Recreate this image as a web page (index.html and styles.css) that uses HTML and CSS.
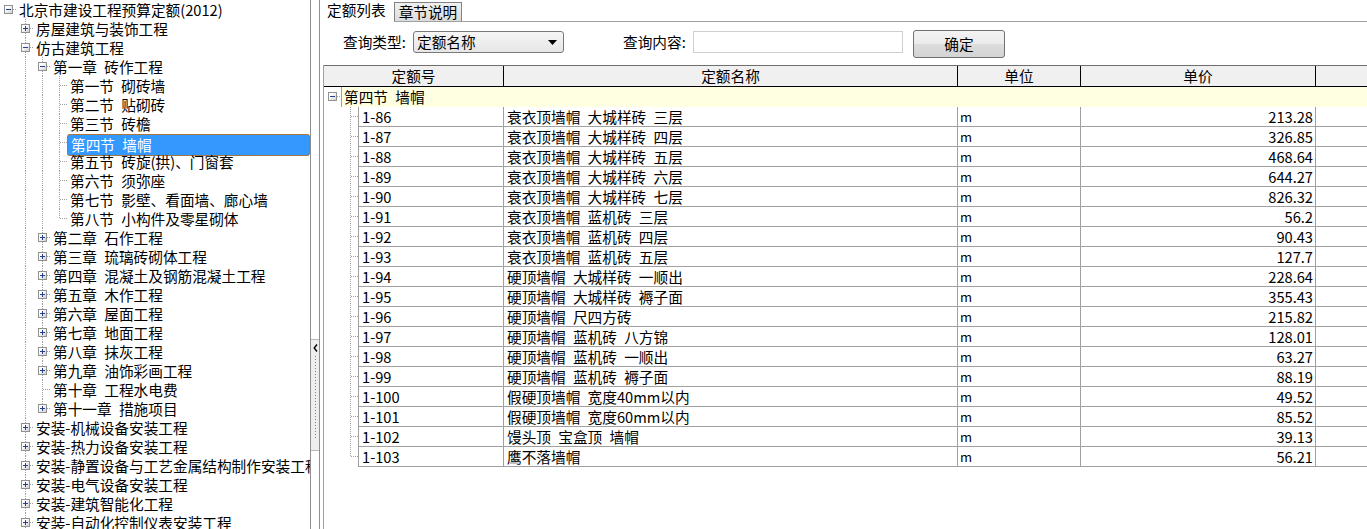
FILE: index.html
```html
<!DOCTYPE html>
<html lang="zh-CN">
<head>
<meta charset="utf-8">
<title>北京市建设工程预算定额</title>
<link rel="stylesheet" href="styles.css">
</head>
<body>
<div class="app">
  <div class="tree">
    <div class="row"><span class="n r"><span class="bx m"></span></span><span class="txt">北京市建设工程预算定额(2012)</span></div>
    <div class="row"><span class="i"></span><span class="n tb"><span class="bx p"></span></span><span class="txt">房屋建筑与装饰工程</span></div>
    <div class="row"><span class="i"></span><span class="n tb"><span class="bx m"></span></span><span class="txt">仿古建筑工程</span></div>
    <div class="row"><span class="i"></span><span class="i v"></span><span class="n tb"><span class="bx m"></span></span><span class="txt">第一章 砖作工程</span></div>
    <div class="row"><span class="i"></span><span class="i v"></span><span class="i v"></span><span class="n tb"></span><span class="txt">第一节 砌砖墙</span></div>
    <div class="row"><span class="i"></span><span class="i v"></span><span class="i v"></span><span class="n tb"></span><span class="txt">第二节 贴砌砖</span></div>
    <div class="row"><span class="i"></span><span class="i v"></span><span class="i v"></span><span class="n tb"></span><span class="txt">第三节 砖檐</span></div>
    <div class="row"><span class="i"></span><span class="i v"></span><span class="i v"></span><span class="n tb"></span><span class="txt sel">第四节 墙帽</span></div>
    <div class="row"><span class="i"></span><span class="i v"></span><span class="i v"></span><span class="n tb"></span><span class="txt">第五节 砖旋(拱)、门窗套</span></div>
    <div class="row"><span class="i"></span><span class="i v"></span><span class="i v"></span><span class="n tb"></span><span class="txt">第六节 须弥座</span></div>
    <div class="row"><span class="i"></span><span class="i v"></span><span class="i v"></span><span class="n tb"></span><span class="txt">第七节 影壁、看面墙、廊心墙</span></div>
    <div class="row"><span class="i"></span><span class="i v"></span><span class="i v"></span><span class="n t"></span><span class="txt">第八节 小构件及零星砌体</span></div>
    <div class="row"><span class="i"></span><span class="i v"></span><span class="n tb"><span class="bx p"></span></span><span class="txt">第二章 石作工程</span></div>
    <div class="row"><span class="i"></span><span class="i v"></span><span class="n tb"><span class="bx p"></span></span><span class="txt">第三章 琉璃砖砌体工程</span></div>
    <div class="row"><span class="i"></span><span class="i v"></span><span class="n tb"><span class="bx p"></span></span><span class="txt">第四章 混凝土及钢筋混凝土工程</span></div>
    <div class="row"><span class="i"></span><span class="i v"></span><span class="n tb"><span class="bx p"></span></span><span class="txt">第五章 木作工程</span></div>
    <div class="row"><span class="i"></span><span class="i v"></span><span class="n tb"><span class="bx p"></span></span><span class="txt">第六章 屋面工程</span></div>
    <div class="row"><span class="i"></span><span class="i v"></span><span class="n tb"><span class="bx p"></span></span><span class="txt">第七章 地面工程</span></div>
    <div class="row"><span class="i"></span><span class="i v"></span><span class="n tb"><span class="bx p"></span></span><span class="txt">第八章 抹灰工程</span></div>
    <div class="row"><span class="i"></span><span class="i v"></span><span class="n tb"><span class="bx p"></span></span><span class="txt">第九章 油饰彩画工程</span></div>
    <div class="row"><span class="i"></span><span class="i v"></span><span class="n tb"></span><span class="txt">第十章 工程水电费</span></div>
    <div class="row"><span class="i"></span><span class="i v"></span><span class="n t"><span class="bx p"></span></span><span class="txt">第十一章 措施项目</span></div>
    <div class="row"><span class="i"></span><span class="n tb"><span class="bx p"></span></span><span class="txt">安装-机械设备安装工程</span></div>
    <div class="row"><span class="i"></span><span class="n tb"><span class="bx p"></span></span><span class="txt">安装-热力设备安装工程</span></div>
    <div class="row"><span class="i"></span><span class="n tb"><span class="bx p"></span></span><span class="txt">安装-静置设备与工艺金属结构制作安装工程</span></div>
    <div class="row"><span class="i"></span><span class="n tb"><span class="bx p"></span></span><span class="txt">安装-电气设备安装工程</span></div>
    <div class="row"><span class="i"></span><span class="n tb"><span class="bx p"></span></span><span class="txt">安装-建筑智能化工程</span></div>
    <div class="row"><span class="i"></span><span class="n tb"><span class="bx p"></span></span><span class="txt">安装-自动化控制仪表安装工程</span></div>
  </div>

  <div class="split">
    <div class="grip">
      <svg class="garr" width="5" height="8" viewBox="0 0 5 8"><path d="M4 0.5L1.2 4L4 7.5" fill="none" stroke="#000" stroke-width="1.4"/></svg>
      <div class="dots"></div>
    </div>
  </div>

  <div class="main">
    <div class="tabs">
      <span class="tab on">定额列表</span>
      <span class="tab">章节说明</span>
      <span class="tabfill"></span>
    </div>

    <div class="query">
      <span class="lbl">查询类型:</span>
      <div class="sel"><span>定额名称</span><svg class="arr" width="9" height="5" viewBox="0 0 9 5"><path d="M0 0H9L4.5 5Z" fill="#000"/></svg></div>
      <span class="lbl lbl2">查询内容:</span>
      <div class="inp"></div>
      <div class="btn">确定</div>
    </div>

    <div class="grid">
      <div class="hrow">
        <div class="hc">定额号</div>
        <div class="hc">定额名称</div>
        <div class="hc">单位</div>
        <div class="hc">单价</div>
        <div class="hc last"></div>
      </div>
      <div class="grow"><span class="gg"><span class="bx m"></span></span><div class="gcell">第四节 墙帽</div></div>

      <div class="drow"><span class="dg"></span><div class="c code">1-86</div><div class="c">衰衣顶墙帽 大城样砖 三层</div><div class="c unit">m</div><div class="c num">213.28</div><div class="c last"></div></div>
      <div class="drow"><span class="dg"></span><div class="c code">1-87</div><div class="c">衰衣顶墙帽 大城样砖 四层</div><div class="c unit">m</div><div class="c num">326.85</div><div class="c last"></div></div>
      <div class="drow"><span class="dg"></span><div class="c code">1-88</div><div class="c">衰衣顶墙帽 大城样砖 五层</div><div class="c unit">m</div><div class="c num">468.64</div><div class="c last"></div></div>
      <div class="drow"><span class="dg"></span><div class="c code">1-89</div><div class="c">衰衣顶墙帽 大城样砖 六层</div><div class="c unit">m</div><div class="c num">644.27</div><div class="c last"></div></div>
      <div class="drow"><span class="dg"></span><div class="c code">1-90</div><div class="c">衰衣顶墙帽 大城样砖 七层</div><div class="c unit">m</div><div class="c num">826.32</div><div class="c last"></div></div>
      <div class="drow"><span class="dg"></span><div class="c code">1-91</div><div class="c">衰衣顶墙帽 蓝机砖 三层</div><div class="c unit">m</div><div class="c num">56.2</div><div class="c last"></div></div>
      <div class="drow"><span class="dg"></span><div class="c code">1-92</div><div class="c">衰衣顶墙帽 蓝机砖 四层</div><div class="c unit">m</div><div class="c num">90.43</div><div class="c last"></div></div>
      <div class="drow"><span class="dg"></span><div class="c code">1-93</div><div class="c">衰衣顶墙帽 蓝机砖 五层</div><div class="c unit">m</div><div class="c num">127.7</div><div class="c last"></div></div>
      <div class="drow"><span class="dg"></span><div class="c code">1-94</div><div class="c">硬顶墙帽 大城样砖 一顺出</div><div class="c unit">m</div><div class="c num">228.64</div><div class="c last"></div></div>
      <div class="drow"><span class="dg"></span><div class="c code">1-95</div><div class="c">硬顶墙帽 大城样砖 褥子面</div><div class="c unit">m</div><div class="c num">355.43</div><div class="c last"></div></div>
      <div class="drow"><span class="dg"></span><div class="c code">1-96</div><div class="c">硬顶墙帽 尺四方砖</div><div class="c unit">m</div><div class="c num">215.82</div><div class="c last"></div></div>
      <div class="drow"><span class="dg"></span><div class="c code">1-97</div><div class="c">硬顶墙帽 蓝机砖 八方锦</div><div class="c unit">m</div><div class="c num">128.01</div><div class="c last"></div></div>
      <div class="drow"><span class="dg"></span><div class="c code">1-98</div><div class="c">硬顶墙帽 蓝机砖 一顺出</div><div class="c unit">m</div><div class="c num">63.27</div><div class="c last"></div></div>
      <div class="drow"><span class="dg"></span><div class="c code">1-99</div><div class="c">硬顶墙帽 蓝机砖 褥子面</div><div class="c unit">m</div><div class="c num">88.19</div><div class="c last"></div></div>
      <div class="drow"><span class="dg"></span><div class="c code">1-100</div><div class="c">假硬顶墙帽 宽度40mm以内</div><div class="c unit">m</div><div class="c num">49.52</div><div class="c last"></div></div>
      <div class="drow"><span class="dg"></span><div class="c code">1-101</div><div class="c">假硬顶墙帽 宽度60mm以内</div><div class="c unit">m</div><div class="c num">85.52</div><div class="c last"></div></div>
      <div class="drow"><span class="dg"></span><div class="c code">1-102</div><div class="c">馒头顶 宝盒顶 墙帽</div><div class="c unit">m</div><div class="c num">39.13</div><div class="c last"></div></div>
      <div class="drow"><span class="dg end"></span><div class="c code">1-103</div><div class="c">鹰不落墙帽</div><div class="c unit">m</div><div class="c num">56.21</div><div class="c last"></div></div>
    </div>
  </div>
</div>
</body>
</html>
```

FILE: styles.css
```css
:root {
  --dv: repeating-linear-gradient(to bottom, #a0a0a0 0 1px, transparent 1px 2px);
  --dh: repeating-linear-gradient(to right, #a0a0a0 0 1px, transparent 1px 2px);
}

* { box-sizing: border-box; }

html, body {
  margin: 0;
  padding: 0;
  background: #fff;
}

body {
  width: 1367px;
  height: 529px;
  overflow: hidden;
  font-family: "Noto Sans CJK SC", "Noto Sans", sans-serif;
  font-size: 14.67px;
  line-height: 19px;
  color: #000;
  word-spacing: 4px;
}

.app {
  display: flex;
  height: 529px;
}

/* ---------- tree ---------- */
.tree {
  width: 311px;
  flex: none;
  border-right: 1px solid #8e8f94;
  overflow: hidden;
}

.row {
  display: flex;
  height: 19px;
}

.i {
  width: 17px;
  flex: none;
}

.i.v {
  background: var(--dv) 8px 0 / 1px 100% no-repeat;
}

.n {
  width: 17px;
  flex: none;
  display: flex;
  align-items: center;
  background-repeat: no-repeat;
}

.n.tb {
  background-image: var(--dv), var(--dh);
  background-size: 1px 100%, 9px 1px;
  background-position: 8px 0, 9px 9px;
}

.n.t {
  background-image: var(--dv), var(--dh);
  background-size: 1px 10px, 9px 1px;
  background-position: 8px 0, 9px 9px;
}

.n.r {
  background-image: var(--dh);
  background-size: 8px 1px;
  background-position: 9px 9px;
}

.bx {
  display: block;
  width: 9px;
  height: 9px;
  margin-left: 4px;
  border: 1px solid #919191;
  background-repeat: no-repeat;
}

.bx.m {
  background-image:
    linear-gradient(#24408f, #24408f),
    linear-gradient(135deg, #ffffff 30%, #d0d0d0);
  background-size: 5px 1px, 100% 100%;
  background-position: 1px 3px, 0 0;
}

.bx.p {
  background-image:
    linear-gradient(#24408f, #24408f),
    linear-gradient(#24408f, #24408f),
    linear-gradient(135deg, #ffffff 30%, #d0d0d0);
  background-size: 5px 1px, 1px 5px, 100% 100%;
  background-position: 1px 3px, 3px 1px, 0 0;
}

.txt {
  flex: 1;
  padding-left: 2px;
  line-height: 19px;
  white-space: nowrap;
  overflow: hidden;
}

.txt.sel {
  margin-left: -1px;
  padding-left: 3px;
  background: #3399ff;
  color: #fff;
  outline: 1px dotted #b07a3c;
  outline-offset: -1px;
}

/* ---------- splitter ---------- */
.split {
  width: 9px;
  flex: none;
  border-right: 1px solid #8e8f94;
  padding-top: 339px;
}

.grip {
  height: 112px;
  background: #eeeeee;
  border-top: 1px solid #b8b8b8;
  border-bottom: 1px solid #b8b8b8;
  display: flex;
  flex-direction: column;
}

.garr {
  display: block;
  margin: 4px 0 0 2px;
}

.dots {
  width: 1px;
  height: 84px;
  margin: 4px 0 0 4px;
  background: repeating-linear-gradient(to bottom, #2f8cff 0 1px, transparent 1px 3px);
}

/* ---------- main ---------- */
.main {
  flex: 1;
  display: flex;
  flex-direction: column;
  min-width: 0;
}

.tabs {
  height: 22px;
  display: flex;
  align-items: flex-end;
  flex: none;
}

.tab {
  height: 20px;
  line-height: 18px;
  padding: 0 4px;
  border: 1px solid #828282;
  border-bottom-color: #a0a0a0;
  background: linear-gradient(#f0f0f0, #dcdcdc);
  white-space: nowrap;
  word-spacing: 0;
}

.tab.on {
  height: 22px;
  line-height: 20px;
  padding: 0 8px 0 7px;
  border: none;
  background: #fff;
}

.tabfill {
  flex: 1;
  height: 1px;
  background: #a0a0a0;
}

.query {
  flex: none;
  height: 28px;
  margin-top: 8px;
  padding-left: 23px;
  display: flex;
  align-items: flex-start;
}

.lbl {
  width: 70px;
  margin-top: 1px;
  line-height: 22px;
  white-space: nowrap;
}

.lbl2 {
  margin-left: 59px;
}

.sel {
  width: 151px;
  height: 22px;
  margin-top: 1px;
  border: 1px solid #7a7a7a;
  border-radius: 3px;
  background: linear-gradient(#f6f6f6, #e6e6e6);
  display: flex;
  align-items: center;
  justify-content: space-between;
  padding: 0 6px 0 3px;
  line-height: 20px;
}

.arr {
  display: block;
}

.inp {
  width: 210px;
  height: 22px;
  margin-top: 1px;
  border: 1px solid #cfcfcf;
  background: #fff;
}

.btn {
  width: 92px;
  height: 28px;
  margin-left: 10px;
  border: 1px solid #707070;
  border-radius: 3px;
  background: linear-gradient(#f3f3f3 0%, #ebebeb 50%, #dddddd 50%, #d3d3d3 100%);
  text-align: center;
  line-height: 26px;
}

/* ---------- grid ---------- */
.grid {
  flex: 1;
  margin-top: 7px;
  margin-left: 3px;
  border-left: 1px solid #a0a0a0;
  overflow: hidden;
}

.hrow {
  display: grid;
  grid-template-columns: 180px 454px 123px 235px 1fr;
  height: 22px;
  border-top: 1px solid #6e6e6e;
  border-bottom: 1px solid #000;
  background: #f0f0f0;
}

.hc {
  border-right: 1px solid #000;
  text-align: center;
  line-height: 20px;
  white-space: nowrap;
}

.hc.last {
  border-right: none;
}

.grow {
  display: flex;
  height: 20px;
}

.gg {
  width: 17px;
  flex: none;
  display: flex;
  align-items: flex-start;
  padding-top: 5px;
  background: var(--dh) 13px 9px / 4px 1px no-repeat;
}

.gcell {
  flex: 1;
  background: #ffffe1;
  border-left: 1px solid #a0a0a0;
  padding-left: 2px;
  line-height: 20px;
  white-space: nowrap;
}

.drow {
  display: grid;
  grid-template-columns: 34px 146px 454px 123px 235px 1fr;
  height: 20px;
}

.dg {
  background-image: var(--dv), var(--dh);
  background-repeat: no-repeat;
  background-size: 1px 100%, 8px 1px;
  background-position: 26px 0, 27px 9px;
}

.dg.end {
  background-size: 1px 10px, 8px 1px;
}

.c {
  border-right: 1px solid #a0a0a0;
  border-bottom: 1px solid #a0a0a0;
  line-height: 19px;
  padding: 0 3px;
  white-space: nowrap;
  overflow: hidden;
}

.c.code {
  border-left: 1px solid #a0a0a0;
}

.c.unit {
  padding-left: 2px;
  font-size: 13px;
}

.c.num {
  text-align: right;
  padding-right: 2px;
}

.c.last {
  border-right: none;
}
```
